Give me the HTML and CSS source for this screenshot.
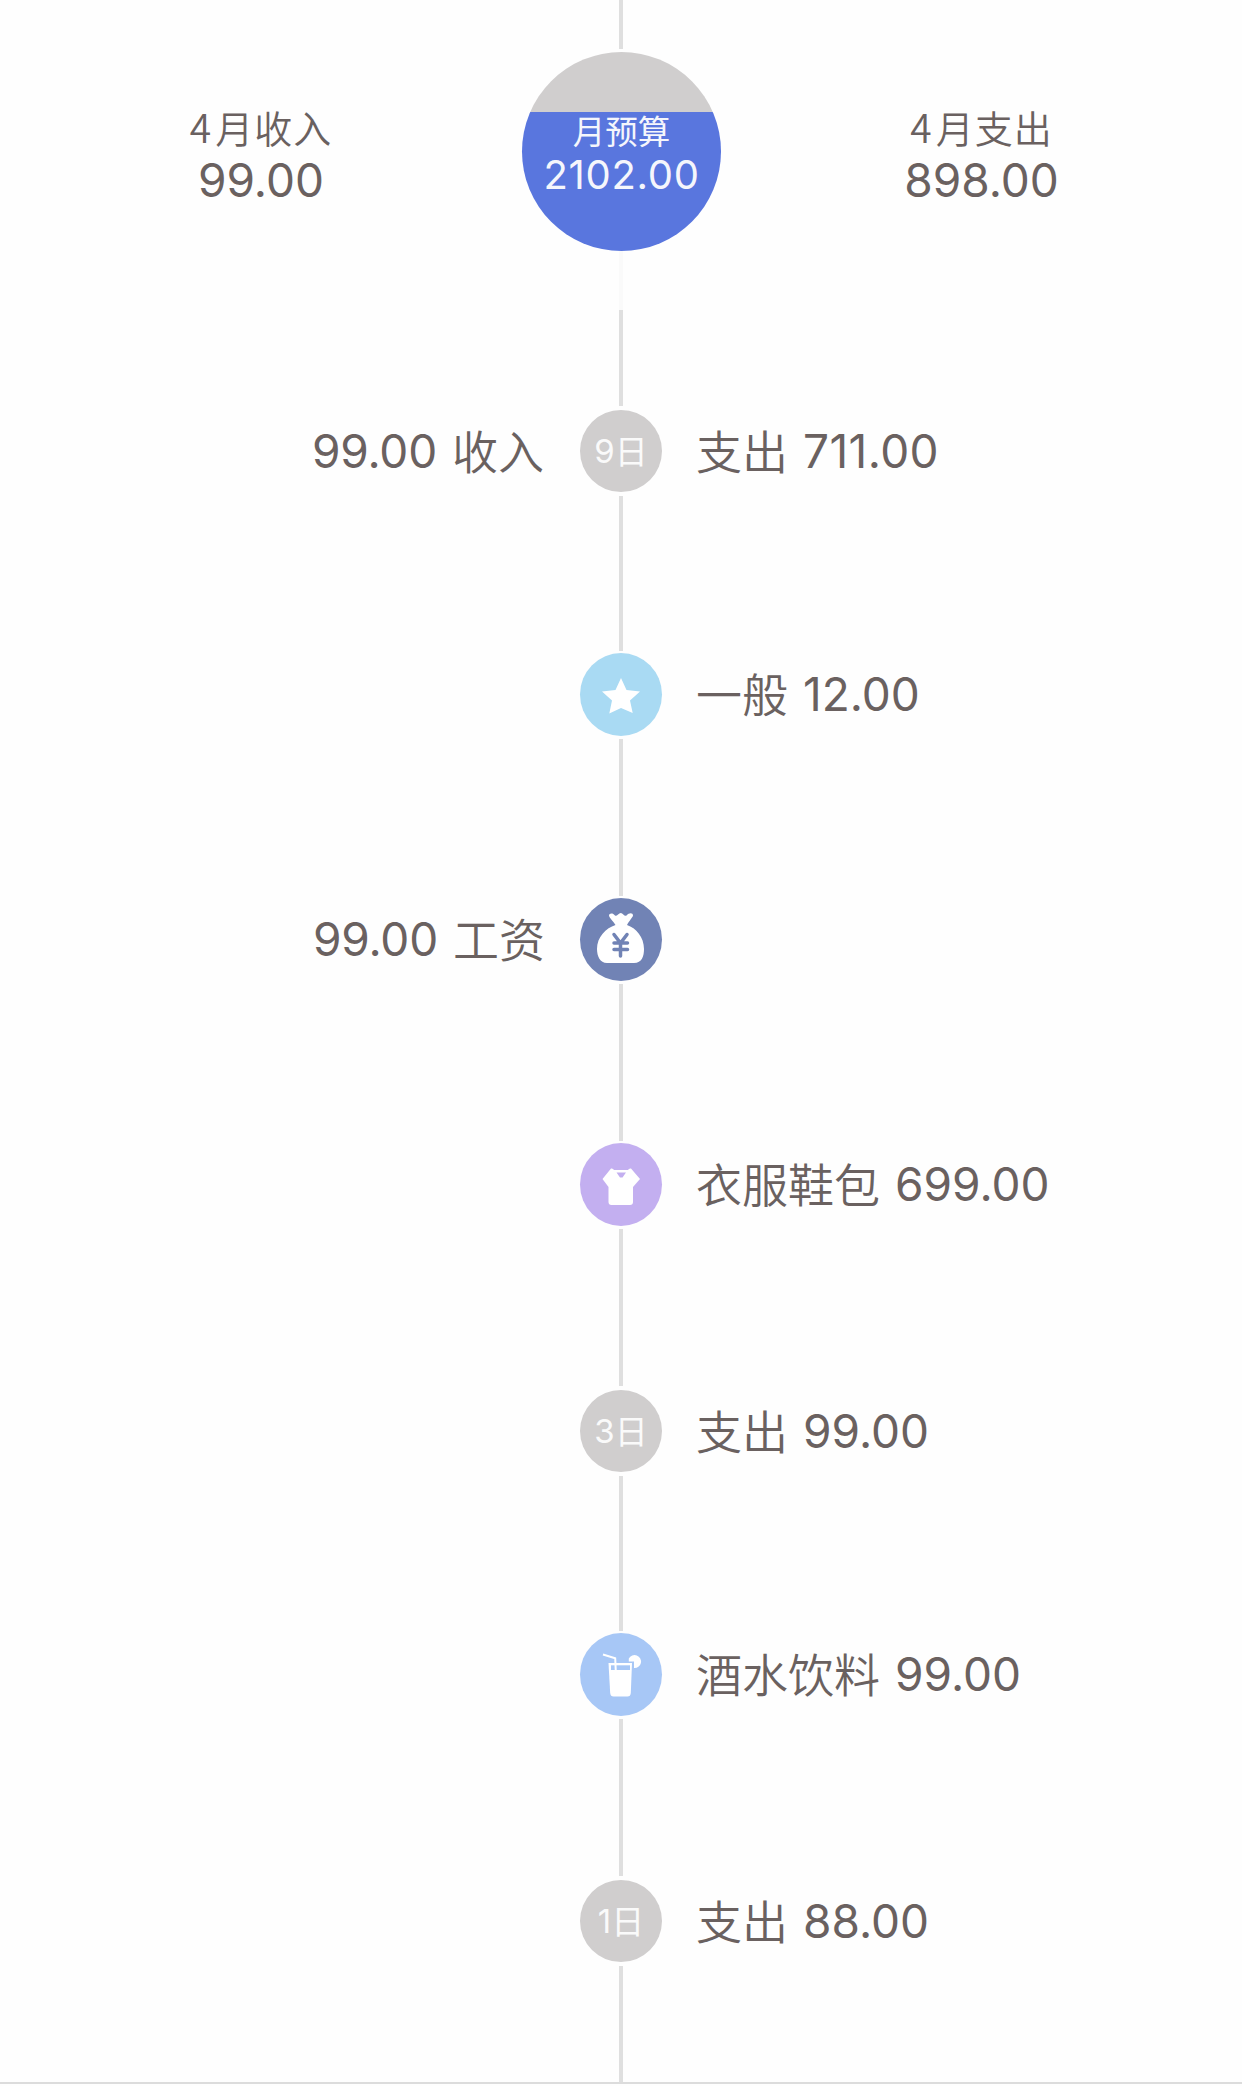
FILE: index.html
```html
<!DOCTYPE html>
<html lang="zh-CN">
<head>
<meta charset="utf-8">
<title>记账</title>
<link rel="stylesheet" href="styles.css">
</head>
<body>
<main class="timeline">
  <div class="line line-top"></div>
  <header class="summary">
    <section class="total">
      <div class="label"><span class="label-num">4</span>月收入</div>
      <div class="sum">99.00</div>
    </section>
    <section class="budget">
      <div class="budget-label">月预算</div>
      <div class="budget-sum">2102.00</div>
    </section>
    <section class="total">
      <div class="label"><span class="label-num">4</span>月支出</div>
      <div class="sum">898.00</div>
    </section>
  </header>
  <div class="line line-faint"></div>
  <div class="line line-first"></div>

  <div class="row day-row">
    <div class="income"><span class="num">99.00</span><span class="han">收入</span></div>
    <div class="node day"><span class="day-num">9</span><span>日</span></div>
    <div class="expense"><span class="han">支出</span><span class="num seven">711.00</span></div>
  </div>
  <div class="line line-short"></div>

  <div class="row">
    <div class="income"></div>
    <div class="node general">
      <svg viewBox="0 0 82 82"><path d="M41 24l5.500 12 13.500 1.500-10 9 2.700 12.500L41 54l-11.700 5.500L32 46.500l-10-9 13.500-1.500z"/></svg>
    </div>
    <div class="expense"><span class="han">一般</span><span class="num">12.00</span></div>
  </div>
  <div class="line"></div>

  <div class="row">
    <div class="income salary-text"><span class="num">99.00</span><span class="han">工资</span></div>
    <div class="node salary">
      <svg viewBox="0 0 82 82">
        <path d="M35.500 26C33 22 29 18.500 29 16.500C29 14 33 13.500 35 16.500C36.500 18 38.500 14 40.800 14C43 14 44.500 18 46.500 16.500C49 13.500 53 13.500 53 16.500C53 18 49 22 47 26C56 29 64 38 64 50C64 57 62 64 54 64H27C20 64 17 57 17 50C17 38 26 29 35.500 26Z"/>
        <path class="yen" d="M34 35.500L40.500 44L47 35.500M40.500 44V57M34 44H47.500M34 50.500H47.500"/>
      </svg>
    </div>
    <div class="expense"></div>
  </div>
  <div class="line"></div>

  <div class="row">
    <div class="income"></div>
    <div class="node clothes">
      <svg viewBox="0 0 82 82">
        <path d="M31 24.500Q33 24 34 26H48Q49 24 51 24.500L60 35L53 43V58Q53 61 50 61H31.500Q28.500 61 28.500 58V43L22.500 35Z"/>
        <path class="cut" d="M36.500 28.500H46L42.500 33.500H40Z"/>
      </svg>
    </div>
    <div class="expense"><span class="han">衣服鞋包</span><span class="num">699.00</span></div>
  </div>
  <div class="line"></div>

  <div class="row day-row">
    <div class="income"></div>
    <div class="node day"><span class="day-num">3</span><span>日</span></div>
    <div class="expense"><span class="han">支出</span><span class="num">99.00</span></div>
  </div>
  <div class="line line-short"></div>

  <div class="row">
    <div class="income"></div>
    <div class="node drink">
      <svg viewBox="0 0 82 82">
        <path d="M28.500 29H52L50.800 59Q50.500 62.500 47.500 62.500H33.500Q30.500 62.500 30.200 59Z"/>
        <path class="cut" d="M31 31.300H50V36H31Z"/>
        <path class="straw" d="M23 20.500L35.200 24.300L35.800 38"/>
        <path d="M48.800 24.500A6.500 6.500 0 1 1 54 34V27.500H48.800Z"/>
      </svg>
    </div>
    <div class="expense"><span class="han">酒水饮料</span><span class="num">99.00</span></div>
  </div>
  <div class="line"></div>

  <div class="row day-row">
    <div class="income"></div>
    <div class="node day"><span class="day-num">1</span><span>日</span></div>
    <div class="expense"><span class="han">支出</span><span class="num">88.00</span></div>
  </div>
  <div class="line line-last"></div>
  <footer class="rule"></footer>
</main>
</body>
</html>
```
FILE: styles.css
```css
* { box-sizing: border-box; }
body {
  margin: 0;
  background: #fefefe;
  color: #6a6160;
  font-family: Inter, "Noto Sans CJK SC", sans-serif;
}
.timeline {
  width: 1242px;
  height: 2086px;
  display: flex;
  flex-direction: column;
  align-items: center;
  overflow: hidden;
}
.line { width: 4px; height: 157px; margin: 3px 0 2px; background: #dfdfdf; flex: none; }
.line-short { height: 155px; }
.line-top { height: 49px; margin: 0 0 3px; }
.line-faint { height: 59px; margin: 0; background: #fafafa; }
.line-first { height: 96px; margin: 0 0 2px; }
.line-last { height: 116px; margin: 3px 0 0; }
.summary {
  flex: none;
  width: 100%;
  height: 199px;
  display: grid;
  grid-template-columns: 522px 199px 521px;
  text-align: center;
}
.total { padding-top: 48px; white-space: nowrap; }
.label {
  font: 350 38px/52px "Noto Sans CJK SC", sans-serif;
  letter-spacing: 1px;
}
.label-num { font-size: 39px; margin-right: 3px; }
.sum { font-size: 46px; line-height: 54px; }
.budget {
  border-radius: 50%;
  background: linear-gradient(#d0cece 60px, #5976de 60px);
  color: #f5f6fc;
  padding-top: 57px;
  white-space: nowrap;
}
.budget-label { font: 400 32.5px/42px "Noto Sans CJK SC", sans-serif; }
.budget-sum { font-size: 40px; line-height: 48px; letter-spacing: 0.7px; }
.row {
  flex: none;
  width: 100%;
  height: 83px;
  display: grid;
  grid-template-columns: 545px 82px 545px;
  column-gap: 35px;
  align-items: center;
}
.day-row { height: 82px; margin: 2px 0 1px; }
.income, .expense { display: flex; align-items: center; gap: 15px; white-space: nowrap; line-height: 82px; }
.expense { margin-left: -1px; }
.income { justify-content: flex-end; padding-right: 1px; }
.salary-text { padding-right: 0; }
.han { font-family: "Noto Sans CJK SC", sans-serif; font-size: 46px; font-weight: 350; margin-top: -5px; }
.num { font-size: 46px; margin-top: -1px; }
.income .num { letter-spacing: -0.2px; }
.seven { letter-spacing: 0.4px; }
.node {
  width: 82px;
  height: 100%;
  border-radius: 50%;
  display: flex;
  justify-content: center;
  align-items: center;
}
.node svg { width: 82px; height: 82px; fill: #fff; }
.day { background: #d0cece; color: #fafafa; font: 33px/82px "Noto Sans CJK SC", sans-serif; }
.day span { margin-top: -3px; }
.day .day-num { font-family: Inter, sans-serif; font-size: 33px; margin-top: 0; }
.general { background: #a9daf3; }
.salary { background: #7183b5; }
.clothes { background: #c3aff0; }
.drink { background: #a7c7f6; }
.salary .yen { fill: none; stroke: #7183b5; stroke-width: 3.5; stroke-linecap: round; }
.clothes .cut { fill: #c3aff0; }
.drink .cut { fill: #a7c7f6; }
.drink .straw { fill: none; stroke: #fff; stroke-width: 2; }
.rule { width: 100%; height: 2px; background: #dcdcdc; flex: none; }
```
